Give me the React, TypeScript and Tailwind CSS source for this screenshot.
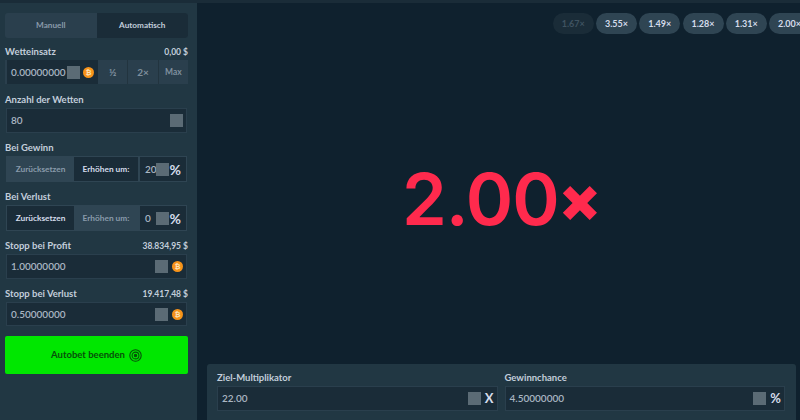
import React from 'react';

const font = { fontFamily: '"Lato", "Liberation Sans", sans-serif' };
const bigFont = { fontFamily: '"Inter", "Liberation Sans", sans-serif' };

const Swatch = () => <div className="w-[13px] h-[13px] bg-[#5b6b75] shrink-0" />;

const Coin = () => (
  <div className="w-[11px] h-[11px] rounded-full bg-[#f7931a] shrink-0 flex items-center justify-center text-[7px] font-bold leading-none text-[#fde2b8]">₿</div>
);

const Label = ({ text, value }: { text: string; value?: string }) => (
  <div className="flex items-center justify-between h-[14px] text-[9.5px] font-bold">
    <span className="text-[#c3cedb]">{text}</span>
    {value && <span className="text-[8.5px] text-[#c3cedb]">{value}</span>}
  </div>
);

const Field = ({ value, coin, suffix, className = '' }: { value: string; coin?: boolean; suffix?: string; className?: string }) => (
  <div className={`flex items-center h-[25px] pl-[4px] pr-[3px] bg-[#1a2c38] border border-[#2a3f4d] text-[10px] font-semibold text-[#a9b6c2] ${className}`}>
    <span className="flex-1">{value}</span>
    <Swatch />
    {coin && <div className="ml-[4px]"><Coin /></div>}
    {suffix && <span className="ml-[4px] text-[13px] font-bold text-[#d5dceb]">{suffix}</span>}
  </div>
);

const Stepper = ({ active, value }: { active: 'reset' | 'inc'; value: string }) => (
  <div className="flex h-[26px] mx-[1px] bg-[#2f4553] p-[1px] text-[8.3px] font-bold">
    <div className={`w-[67px] flex items-center justify-center ${active === 'reset' ? 'bg-[#1a2c38] text-[#d5dceb]' : 'text-[#8a9bab]'}`}>Zurücksetzen</div>
    <div className={`w-[64px] flex items-center justify-center ${active === 'inc' ? 'bg-[#1a2c38] text-[#d5dceb]' : 'text-[#8a9bab]'}`}>Erhöhen um:</div>
    <div className="flex-1 ml-[2px] flex items-center pl-[5px] pr-[5px] bg-[#1a2c38] text-[10px] font-semibold text-[#a9b6c2]">
      <span className="w-[11px]">{value}</span>
      <Swatch />
      <span className="ml-auto text-[14px] font-bold text-[#d5dceb]">%</span>
    </div>
  </div>
);

const TargetIcon = () => (
  <svg width="13" height="13" viewBox="0 0 13 13" fill="none" stroke="#07500a" strokeWidth="1.1" className="ml-[4px]">
    <circle cx="6.5" cy="6.5" r="5.7" />
    <circle cx="6.5" cy="6.5" r="3.4" />
    <circle cx="6.5" cy="6.5" r="1.2" fill="#07500a" />
  </svg>
);

const pills = ['3.55×', '1.49×', '1.28×', '1.31×', '2.00×'];

const App: React.FC = () => {
  return (
    <div className="w-[800px] h-[420px] overflow-hidden flex flex-col bg-[#0f212e]" style={font}>
      <div className="h-[3px] bg-[#1a2c38] shrink-0" />
      <div className="flex flex-1 min-h-0">
        <aside className="w-[197px] shrink-0 bg-[#213743] pl-[5px] pr-[9px] pt-[10px]">
          <div className="flex h-[25px] bg-[#2a3f4d] rounded-[3px] text-[8.2px] font-bold">
            <div className="flex-1 flex items-center justify-center text-[#8a9bab]">Manuell</div>
            <div className="flex-1 flex items-center justify-center bg-[#1a2c38] text-[#c3cedb] rounded-r-[3px]">Automatisch</div>
          </div>

          <div className="mt-[7px]"><Label text="Wetteinsatz" value="0,00 $" /></div>
          <div className="flex mt-[1px] h-[24px] bg-[#2a3f4d]">
            <div className="w-[91px] ml-[2px] flex items-center pl-[4px] bg-[#1a2c38] text-[10px] font-semibold text-[#a9b6c2]">
              <span className="w-[56px]">0.00000000</span>
              <Swatch />
              <div className="ml-[3px]"><Coin /></div>
            </div>
            <div className="flex-1 flex items-center justify-center text-[10px] font-bold text-[#7f8f9e]">½</div>
            <div className="flex-1 flex items-center justify-center text-[10px] font-bold text-[#7f8f9e] border-l border-[#22343f]">2×</div>
            <div className="flex-1 flex items-center justify-center text-[8.5px] font-bold text-[#7f8f9e] border-l border-[#22343f]">Max</div>
          </div>

          <div className="mt-[9px]"><Label text="Anzahl der Wetten" /></div>
          <Field value="80" className="mt-[1px] mx-[1px]" />

          <div className="mt-[8px]"><Label text="Bei Gewinn" /></div>
          <div className="mt-[1px]"><Stepper active="inc" value="20" /></div>

          <div className="mt-[8px]"><Label text="Bei Verlust" /></div>
          <div className="mt-[1px]"><Stepper active="reset" value="0" /></div>

          <div className="mt-[8px]"><Label text="Stopp bei Profit" value="38.834,95 $" /></div>
          <Field value="1.00000000" coin className="mt-[1px] mx-[1px]" />

          <div className="mt-[8px]"><Label text="Stopp bei Verlust" value="19.417,48 $" /></div>
          <Field value="0.50000000" coin className="mt-[1px] mx-[1px] !h-[24px]" />

          <button className="mt-[10px] w-full h-[38px] flex items-center justify-center bg-[#00e700] rounded-[2px] text-[9.5px] font-bold text-[#07500a]">
            Autobet beenden
            <TargetIcon />
          </button>
        </aside>

        <main className="flex-1 min-w-0 flex flex-col">
          <div className="flex justify-end gap-[2.25px] -mr-[10px] pt-[10px] shrink-0">
            <div className="w-[41px] h-[21px] rounded-full bg-[#1a2c38] flex items-center justify-center text-[9px] font-bold text-[#3f5361]">1.67×</div>
            {pills.map(p => (
              <div key={p} className="w-[41px] h-[21px] rounded-full bg-[#2f4553] flex items-center justify-center text-[9px] font-bold text-[#d5dceb]">{p}</div>
            ))}
          </div>
          <div className="flex-1 flex items-center justify-center pl-[6px] text-[#ff2a4d] whitespace-nowrap" style={bigFont}>
            <span className="text-[72px] leading-[90px] font-semibold tracking-[-1px]">2.00</span>
            <span className="text-[61px] leading-[90px] font-black">×</span>
          </div>
          <div className="h-[56px] shrink-0 ml-[10px] mr-[4px] bg-[#213743] rounded-t-[3px] flex gap-[7px] pl-[10px] pr-[11px] pt-[7px]">
            <div className="flex-1">
              <Label text="Ziel-Multiplikator" />
              <Field value="22.00" suffix="X" className="mt-[1px]" />
            </div>
            <div className="flex-1">
              <Label text="Gewinnchance" />
              <Field value="4.50000000" suffix="%" className="mt-[1px]" />
            </div>
          </div>
        </main>
      </div>
    </div>
  );
};

export default App;
